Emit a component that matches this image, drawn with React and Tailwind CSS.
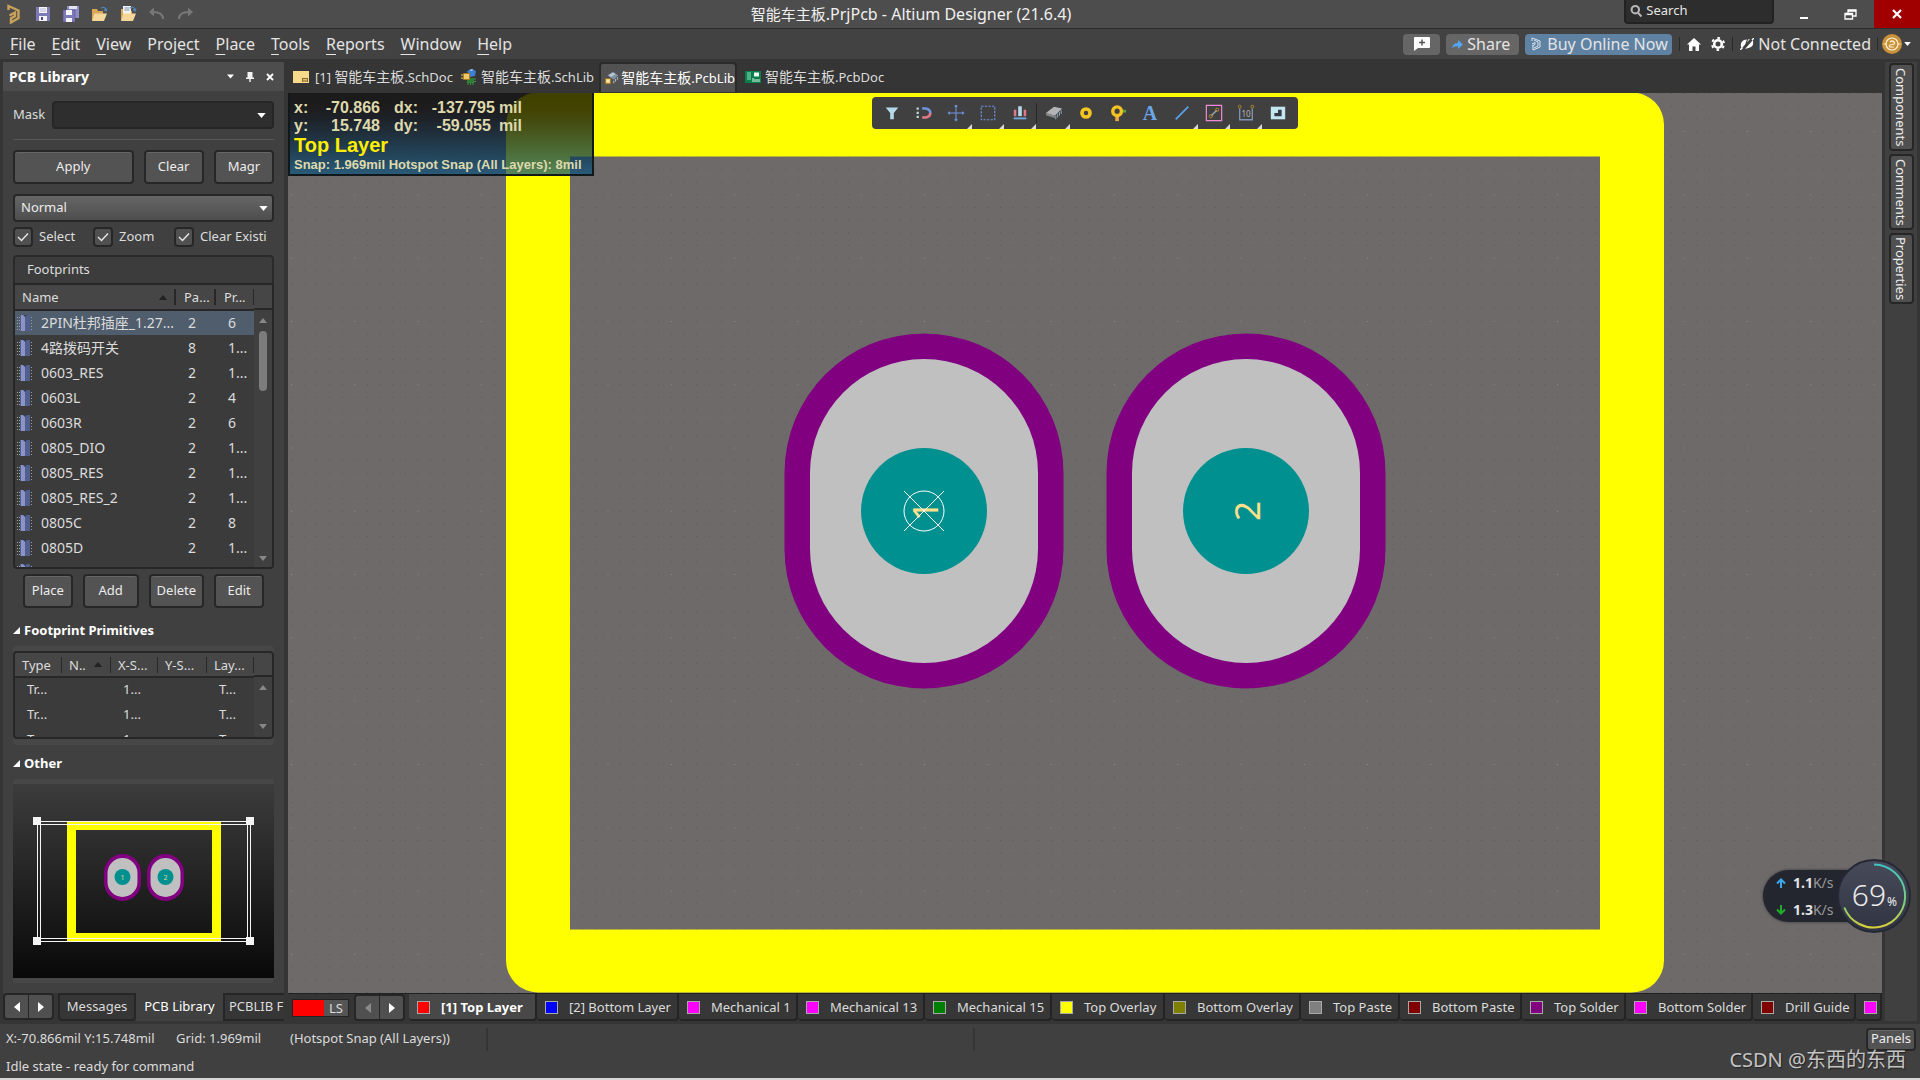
import { useState } from "react";

const menus = [
  ["", "F", "ile"],
  ["", "E", "dit"],
  ["", "V", "iew"],
  ["Proje", "c", "t"],
  ["", "P", "lace"],
  ["", "T", "ools"],
  ["", "R", "eports"],
  ["", "W", "indow"],
  ["", "H", "elp"],
];

const footprints = [
  ["2PIN杜邦插座_1.27...", "2", "6"],
  ["4路拨码开关", "8", "1..."],
  ["0603_RES", "2", "1..."],
  ["0603L", "2", "4"],
  ["0603R", "2", "6"],
  ["0805_DIO", "2", "1..."],
  ["0805_RES", "2", "1..."],
  ["0805_RES_2", "2", "1..."],
  ["0805C", "2", "8"],
  ["0805D", "2", "1..."],
];

const layers = [
  { name: "[1] Top Layer", color: "bg-[#ff0000]", width: "w-[128px]" },
  { name: "[2] Bottom Layer", color: "bg-[#0000ff]", width: "w-[142px]" },
  { name: "Mechanical 1", color: "bg-[#ff00ff]", width: "w-[119px]" },
  { name: "Mechanical 13", color: "bg-[#ff00ff]", width: "w-[127px]" },
  { name: "Mechanical 15", color: "bg-[#008000]", width: "w-[127px]" },
  { name: "Top Overlay", color: "bg-[#ffff00]", width: "w-[113px]" },
  { name: "Bottom Overlay", color: "bg-[#808000]", width: "w-[136px]" },
  { name: "Top Paste", color: "bg-[#808080]", width: "w-[99px]" },
  { name: "Bottom Paste", color: "bg-[#800000]", width: "w-[122px]" },
  { name: "Top Solder", color: "bg-[#800080]", width: "w-[104px]" },
  { name: "Bottom Solder", color: "bg-[#ff00ff]", width: "w-[127px]" },
  { name: "Drill Guide", color: "bg-[#800000]", width: "w-[103px]" },
  { name: "", color: "bg-[#ff00ff]", width: "w-[26px]" },
];

const buttonStyle =
  "flex items-center justify-center rounded border-2 border-[#272727] bg-[#535353] text-[13px] text-[#ececec] shadow-[inset_0_1px_0_#666]";

/* ---------- small icons ---------- */

function Caret({ className }) {
  return (
    <svg viewBox="0 0 10 6" className={className} fill="currentColor">
      <path d="M0 0h10L5 6z" />
    </svg>
  );
}

function AltiumLogo() {
  return (
    <svg viewBox="0 0 14 20" className="h-5 w-3.5" fill="none" stroke="#c9a25a" strokeWidth="2.4">
      <path d="M1.5 6V2l10 4.5V14L4 18.5v-4L8 12V8.5l-5.500 3" />
    </svg>
  );
}

function SaveIcon() {
  return (
    <svg viewBox="0 0 16 16" className="size-4">
      <path d="M1 1h14v14H1z" fill="#7d7ab8" />
      <path d="M4 1h8v6H4z" fill="#f4f4fa" />
      <path d="M5 3h6M5 5h6" stroke="#b7b7cf" />
      <path d="M4 10h8v5H4z" fill="#f4f4fa" />
      <path d="M6 11h2v3H6z" fill="#4b4a7d" />
    </svg>
  );
}

function SaveAllIcon() {
  return (
    <svg viewBox="0 0 16 16" className="size-4">
      <path d="M4 0h12v12H4z" fill="#8e8bc6" />
      <path d="M6 0h8v3H6z" fill="#e6e6f2" />
      <path d="M0 4h12v12H0z" fill="#7d7ab8" stroke="#55538c" strokeWidth=".6" />
      <path d="M3 4h6v5H3z" fill="#f4f4fa" />
      <path d="M3 12h6v4H3z" fill="#f4f4fa" />
    </svg>
  );
}

function OpenIcon({ page }) {
  return (
    <svg viewBox="0 0 17 16" className="h-4 w-[17px]">
      <path d="M1 3h5l1 2h5v9H1z" fill="#d9a957" />
      {page && <path d="M3 0h8v8H3z" fill="#f2f2f2" />}
      {page && <path d="M4.5 2h5M4.5 4h5" stroke="#7c97ad" />}
      <path d="M3.5 7.5H16L13 15H1z" fill="#f6d79a" />
      <path d="M10 2q4-2 5 2M13 3.5l2 1.5 1-2.5" fill="none" stroke="#4f86b5" strokeWidth="1.2" />
    </svg>
  );
}

function UndoIcon({ flip }) {
  return (
    <svg viewBox="0 0 16 14" className={flip ? "h-3.5 w-4 -scale-x-100" : "h-3.5 w-4"} fill="none" stroke="#777" strokeWidth="2">
      <path d="M14 12Q14 5 4 5" />
      <path d="M0 5l5-4.5v9z" fill="#777" stroke="none" />
    </svg>
  );
}

function PinIcon() {
  return (
    <svg viewBox="0 0 8 10" className="h-2.5 w-2" fill="#f2f2f2">
      <path d="M1.5 0h5v5.5H8V7H4.7v3H3.3V7H0V5.5h1.5z" />
    </svg>
  );
}

function SchDocIcon() {
  return (
    <svg viewBox="0 0 16 12" className="h-3 w-4">
      <path d="M0 0h16v12H0z" fill="#f7d98c" />
      <path d="M9 7h6v4H9z" fill="#8a6a2a" />
      <path d="M10 8.5h4M10 10h4" stroke="#f7d98c" strokeWidth=".8" />
    </svg>
  );
}

function SchLibIcon() {
  return (
    <svg viewBox="0 0 16 16" className="size-4">
      <path d="M6 2l5-2 4 2-1 5-5 1z" fill="#3f7fd0" />
      <path d="M8 1l4-1-1 2z" fill="#b9d9f7" />
      <path d="M6 9h7v5H6z" fill="#2c7d33" />
      <path d="M7 13v3M9.5 13v3M12 13v3M13 10h2M13 12.5h2" stroke="#3b9a44" />
      <path d="M2.500 4.500h6v6h-6z" fill="#f2c766" stroke="#a87c25" />
      <path d="M0 6h2M0 9h2" stroke="#f2c766" />
    </svg>
  );
}

function PcbLibIcon() {
  return (
    <svg viewBox="0 0 16 16" className="size-4">
      <path d="M4 5l6-4 6 4-5 5z" fill="#7f93a6" />
      <path d="M5 5l5-3 3 1.500-5 3.500z" fill="#b9c7d3" />
      <path d="M11 11v3M13 9v3M15 7v3" stroke="#c4cdd6" />
      <path d="M1.500 8.500h6v6h-6z" fill="#f2c766" stroke="#8d6a22" />
      <path d="M3 10h3v3H3z" fill="#ffe9ad" />
    </svg>
  );
}

function PcbDocIcon() {
  return (
    <svg viewBox="0 0 16 12" className="h-3 w-4">
      <path d="M0 0h16v12H0z" fill="#07804c" />
      <path d="M2 2h4M2 4h4M2 6h4M2 8h4" stroke="#9fe0bd" />
      <path d="M9 1.5h5v4H9z" fill="#f1f5f1" />
      <path d="M8 7v4M10 8v3M12 8v3M14 8v3" stroke="#e4f1e8" />
    </svg>
  );
}

function ChipIcon() {
  return (
    <svg viewBox="0 0 16 16" className="size-4 shrink-0">
      <path d="M0 2.5h16M0 5.5h16M0 8.5h16M0 11.5h16M0 14.5h16" stroke="#9c9f9b" strokeDasharray="1 1" />
      <path d="M3 0h10v16H3z" fill="#4f608f" />
      <path d="M4 0h4v16H4z" fill="#8e93c6" />
      <path d="M6 0h4l-2 2z" fill="#353f5e" />
    </svg>
  );
}

/* ---------- top bars ---------- */

function TitleBar() {
  return (
    <header className="flex h-7 shrink-0 items-center bg-[#4d4d4d]">
      <div className="flex w-[198px] items-center gap-3 pl-[7px]">
        <AltiumLogo />
        <button aria-label="Save" className="ml-0.5"><SaveIcon /></button>
        <button aria-label="Save all"><SaveAllIcon /></button>
        <button aria-label="Open"><OpenIcon /></button>
        <button aria-label="Open project"><OpenIcon page /></button>
        <button aria-label="Undo"><UndoIcon /></button>
        <button aria-label="Redo"><UndoIcon flip /></button>
      </div>
      <h1 className="flex-1 text-center text-base text-[#f0f0f0]">
        <span className="text-[15px]">智能车主板</span>.PrjPcb - Altium Designer (21.6.4)
      </h1>
      <label className="mb-1 flex h-6 w-[150px] items-center gap-1 rounded-b border-2 border-t-0 border-[#222] bg-[#2d2d2d] px-1">
        <svg viewBox="0 0 14 14" className="size-3.5" fill="none" stroke="#b5b5b5" strokeWidth="2.4">
          <circle cx="6" cy="5.5" r="4.2" />
          <path d="M9 9l4 4.2" />
        </svg>
        <input placeholder="Search" aria-label="Search" className="w-full min-w-0 text-[13px] placeholder:text-[#e6e6e6]" />
      </label>
      <div className="flex h-full w-[146px] items-center">
        <button aria-label="Minimize" className="flex flex-1 justify-center pt-2 pl-1.5">
          <span className="h-0.5 w-2 bg-white" />
        </button>
        <button aria-label="Restore" className="flex flex-1 justify-center">
          <svg viewBox="0 0 13 11" className="h-[11px] w-[13px]" fill="none" stroke="#fff" strokeWidth="1.3">
            <path d="M1 4.5h7.5V10H1zM4 4V1h8v6H9M4 2h8M1 5.5h7" />
          </svg>
        </button>
        <button aria-label="Close" className="flex h-full w-[46px] items-center justify-center bg-[#a00000]">
          <svg viewBox="0 0 10 10" className="size-2.5" stroke="#fff" strokeWidth="2.2">
            <path d="M1 1l8 8M9 1l-8 8" />
          </svg>
        </button>
      </div>
    </header>
  );
}

function MenuBar() {
  return (
    <nav className="flex h-[31px] shrink-0 items-center border-t border-[#2d2d2d] bg-[#424242] text-base text-[#e4e4e4]">
      <div className="flex gap-4 pl-2.5">
        {menus.map(([before, key, after]) => (
          <button key={key + after}>
            {before}
            <span className="underline underline-offset-4">{key}</span>
            {after}
          </button>
        ))}
      </div>
      <div className="ml-auto flex items-center pr-[9px] whitespace-nowrap">
        <button aria-label="Comment" className="mr-1.5 flex h-[21px] w-[37px] items-center justify-center rounded-sm bg-[#666]">
          <svg viewBox="0 0 16 14" className="h-3.5 w-4">
            <path d="M1 0h14q1 0 1 1v9q0 1-1 1H4l-4 3V1q0-1 1-1z" fill="#fff" />
            <path d="M8 2.5v6M5 5.5h6" stroke="#555" strokeWidth="1.5" />
          </svg>
        </button>
        <button className="mr-1.5 flex h-[21px] w-[73px] items-center gap-1 rounded-sm bg-[#666] pl-1.5">
          <svg viewBox="0 0 11 9" className="h-[9px] w-[11px]" fill="#53a6f0">
            <path d="M0 8q1-5 6-5V0l5 4.500L6 9V6Q2 6 0 8z" />
          </svg>
          Share
        </button>
        <button className="flex h-[21px] w-[147px] items-center gap-1.5 rounded-sm bg-[#5f82a3] pl-1.5">
          <svg viewBox="0 0 10 14" className="h-3.5 w-2.5" fill="none" stroke="#dce6ee" strokeWidth="1">
            <path d="M1 4V1l8 3v6l-7 3V9M3 3l4 2v4l-4 2M1 7l3-1.5v2L1 9" />
          </svg>
          Buy Online Now
        </button>
        <span className="mx-[7px] h-3.5 w-px bg-[#2b2b2b]" />
        <button aria-label="Home">
          <svg viewBox="0 0 14 13" className="h-[13px] w-3.5" fill="#fff">
            <path d="M7 0l7 6.5h-2V13H8.5V8.5h-3V13H2V6.500H0z" />
          </svg>
        </button>
        <button aria-label="Settings" className="ml-2.5">
          <svg viewBox="0 0 14 14" className="size-3.5" fill="none" stroke="#fff">
            <circle cx="7" cy="7" r="3.8" strokeWidth="2.6" />
            <circle cx="7" cy="7" r="6" strokeWidth="2" strokeDasharray="2.6 3.683" strokeDashoffset="-1.8" />
          </svg>
        </button>
        <span className="mx-[7px] h-3.5 w-px bg-[#2b2b2b]" />
        <a href="#" className="flex items-center gap-1">
          <svg viewBox="0 0 14 12" className="h-3 w-3.5">
            <path d="M1 9q-1-5 3-7l6-1-8 9zM13 3q1 5-3 6.5L5 11l8-9z" fill="#fff" />
            <path d="M0 12l2.5-2.5M12 2l2-2" stroke="#fff" strokeWidth="1.5" />
            <path d="M8 0L4 12" stroke="#424242" strokeWidth="1.2" />
          </svg>
          Not Connected
        </a>
        <span className="mr-1 ml-1.5 h-3.5 w-px bg-[#2b2b2b]" />
        <button aria-label="Account" className="flex items-center gap-0.5">
          <svg viewBox="0 0 20 20" className="size-5" fill="none" stroke="#fff2d4" strokeWidth="1.2">
            <circle cx="10" cy="10" r="10" fill="#c8913a" stroke="none" />
            <circle cx="10" cy="10" r="6" />
            <path d="M8 8q2-2 4 0t-2 2.5-2 2.5h4M1.5 10H4M16 10h2.5" />
          </svg>
          <Caret className="h-1 w-[7px] text-white" />
        </button>
      </div>
    </nav>
  );
}

/* ---------- left panel ---------- */

function ScrollArrow({ up }) {
  return <Caret className={up ? "h-[5px] w-2 shrink-0 rotate-180 text-[#888]" : "h-[5px] w-2 shrink-0 text-[#888]"} />;
}

function Check({ label, className }) {
  const [on, setOn] = useState(true);
  return (
    <label className={"flex items-center gap-1.5 whitespace-nowrap " + className}>
      <span className="grid size-5">
        <input
          type="checkbox"
          checked={on}
          onChange={() => setOn(!on)}
          className="col-start-1 row-start-1 size-5 appearance-none rounded border-2 border-[#272727] bg-[#505050]"
        />
        {on && (
          <svg viewBox="0 0 20 20" className="pointer-events-none col-start-1 row-start-1" fill="none" stroke="#e8e8e8" strokeWidth="1.4">
            <path d="M5 10l3.5 3.5L15 6.5" />
          </svg>
        )}
      </span>
      {label}
    </label>
  );
}

function FootprintTable() {
  const [active, setActive] = useState(0);
  return (
    <div className="mt-2">
      <h3 className="h-7 rounded-t border-2 border-b-0 border-[#2a2a2a] bg-[#3c3c3c] pl-3 leading-6">Footprints</h3>
      <div className="grid h-[286px] grid-cols-[1fr_18px] grid-rows-[minmax(0,1fr)] overflow-hidden rounded-b border-2 border-[#272727] bg-[#3b3b3b]">
        <table className="w-full table-fixed self-start">
          <colgroup>
            <col />
            <col className="w-[40px]" />
            <col className="w-[38px]" />
          </colgroup>
          <thead>
            <tr className="h-[25px] border-b-2 border-[#272727] bg-[#464646] text-left">
              <th className="font-normal">
                <span className="flex items-center justify-between border-r-2 border-[#272727] pr-1.5 pl-[7px] leading-4">
                  Name
                  <Caret className="h-[5px] w-2.5 rotate-180 text-[#222]" />
                </span>
              </th>
              <th className="font-normal">
                <span className="block border-r-2 border-[#272727] pl-2 leading-4">Pa...</span>
              </th>
              <th className="font-normal">
                <span className="block border-r border-[#272727] pl-2 leading-4">Pr...</span>
              </th>
            </tr>
          </thead>
          <tbody className="text-sm">
            {footprints.map(([name, pads, prims], i) => (
              <tr key={name} onClick={() => setActive(i)} className={i === active ? "h-[25px] bg-[#4f5d6d]" : "h-[25px]"}>
                <td>
                  <span className="flex items-center gap-2 pl-0.5 leading-5 whitespace-nowrap">
                    <ChipIcon />
                    {name}
                  </span>
                </td>
                <td className="pl-3">{pads}</td>
                <td className="pl-3">{prims}</td>
              </tr>
            ))}
            <tr>
              <td className="pt-1 pl-0.5"><ChipIcon /></td>
            </tr>
          </tbody>
        </table>
        <div className="flex flex-col">
          <div className="h-[25px] shrink-0 border-b-2 border-[#272727] bg-[#464646]" />
          <div className="flex flex-1 flex-col items-center bg-[#404040] pt-2 pb-1.5">
            <ScrollArrow up />
            <span className="mt-2 h-[60px] w-2 rounded-full bg-[#7c7c7c]" />
            <span className="flex-1" />
            <ScrollArrow />
          </div>
        </div>
      </div>
    </div>
  );
}

function PrimitivesTable() {
  return (
    <div className="mt-1.5 rounded bg-[#474747] pt-[5px] pb-1.5">
      <div className="grid h-[88px] grid-cols-[1fr_18px] grid-rows-[minmax(0,1fr)] overflow-hidden rounded border-2 border-[#272727] bg-[#3b3b3b]">
        <table className="w-full table-fixed self-start">
          <colgroup>
            <col className="w-[47px]" />
            <col className="w-[49px]" />
            <col className="w-[47px]" />
            <col className="w-[49px]" />
            <col />
          </colgroup>
          <thead>
            <tr className="h-6 border-b-2 border-[#272727] bg-[#464646] text-left">
              {["Type", "N..", "X-S...", "Y-S...", "Lay..."].map((head) => (
                <th key={head} className="font-normal">
                  <span className="flex items-center justify-between border-r border-[#272727] pr-[7px] pl-[7px] leading-4 whitespace-nowrap">
                    {head}
                    {head === "N.." && <Caret className="h-[5px] w-2.5 rotate-180 text-[#222]" />}
                  </span>
                </th>
              ))}
            </tr>
          </thead>
          <tbody>
            {[0, 1, 2].map((i) => (
              <tr key={i} className="h-[25px]">
                <td className="pl-3">Tr...</td>
                <td />
                <td className="pl-3">1...</td>
                <td />
                <td className="pl-3">T...</td>
              </tr>
            ))}
          </tbody>
        </table>
        <div className="flex flex-col">
          <div className="h-6 shrink-0 border-b-2 border-[#272727] bg-[#464646]" />
          <div className="flex flex-1 flex-col items-center justify-between bg-[#404040] pt-2 pb-2">
            <ScrollArrow up />
            <ScrollArrow />
          </div>
        </div>
      </div>
    </div>
  );
}

function SectionTitle({ children }) {
  return (
    <h2 className="flex items-center gap-1 leading-5 font-bold text-white">
      <svg viewBox="0 0 7 7" className="size-[7px]" fill="#fff">
        <path d="M7 0v7H0z" />
      </svg>
      {children}
    </h2>
  );
}

function Preview() {
  return (
    <div className="mt-1.5 rounded bg-[#474747] py-[5px]">
      <svg viewBox="0 0 261 194" className="block w-full">
        <defs>
          <linearGradient id="previewBg" x1="0" y1="0" x2="0" y2="1">
            <stop offset="0" stopColor="#3c3c3c" />
            <stop offset="1" stopColor="#090909" />
          </linearGradient>
        </defs>
        <rect width="261" height="194" fill="url(#previewBg)" />
        <path d="M54 38h154v119H54zM63 46v103h136V46z" fill="#ff0" fillRule="evenodd" />
        <path d="M26 37.5h210M26 40.5h210M26 154.5h210M26 157.5h210M24.5 38v119M27.5 38v119M234.5 38v119M237.5 38v119" stroke="#f4f4f4" />
        {[24, 237].map((x) => [37, 157].map((y) => <rect key={x + "-" + y} x={x - 4} y={y - 4} width="8" height="8" fill="#f4f4f4" />))}
        {[109.5, 152.5].map((x, i) => (
          <g key={x}>
            <rect x={x - 18.5} y="70" width="37" height="47" rx="18.5" fill="#800080" />
            <rect x={x - 15} y="74" width="30" height="39" rx="15" fill="#c0c0c0" />
            <circle cx={x} cy="93" r="8" fill="#009090" />
            <text x={x} y="95.5" fontSize="7" textAnchor="middle" fill="#e0d48a">{i + 1}</text>
          </g>
        ))}
      </svg>
    </div>
  );
}

function LibraryPanel() {
  return (
    <aside className="flex w-[281px] shrink-0 flex-col bg-[#404040] text-[13px] text-[#dcdcdc]">
      <div className="flex h-[29px] shrink-0 items-center bg-[#4d4d4d] pr-2.5 pl-1.5 text-white">
        <h2 className="flex-1 text-sm font-bold">PCB Library</h2>
        <button aria-label="Panel menu"><Caret className="h-[5px] w-[7px]" /></button>
        <button aria-label="Pin" className="ml-3"><PinIcon /></button>
        <button aria-label="Close panel" className="ml-3">
          <svg viewBox="0 0 8 8" className="size-2" stroke="#fff" strokeWidth="1.8">
            <path d="M1 1l6 6M7 1L1 7" />
          </svg>
        </button>
      </div>
      <div className="flex flex-1 flex-col px-2.5 pt-2.5">
        <label className="flex items-center">
          <span className="w-[39px]">Mask</span>
          <span className="flex h-7 flex-1 items-center rounded border-2 border-[#262626] bg-[#2e2e2e] pr-1.5">
            <input className="w-full min-w-0 px-1" />
            <Caret className="h-[5px] w-[9px] shrink-0 text-white" />
          </span>
        </label>
        <hr className="mt-2.5 border-[#575757]" />
        <div className="mt-2.5 grid h-[34px] grid-cols-[2fr_1fr_1fr] gap-2.5">
          <button className={buttonStyle}>Apply</button>
          <button className={buttonStyle}>Clear</button>
          <button className={buttonStyle}>Magr</button>
        </div>
        <div className="mt-2.5 grid items-center">
          <select
            aria-label="Highlight mode"
            className="col-start-1 row-start-1 h-7 appearance-none rounded border-2 border-[#272727] bg-linear-to-b from-[#666] to-[#4e4e4e] pl-1.5 text-[#ececec]"
          >
            <option>Normal</option>
          </select>
          <Caret className="pointer-events-none col-start-1 row-start-1 mr-1.5 h-[5px] w-[9px] justify-self-end text-white" />
        </div>
        <div className="mt-[5px] flex">
          <Check label="Select" className="w-20" />
          <Check label="Zoom" className="w-[81px]" />
          <Check label="Clear Existi" className="" />
        </div>
        <FootprintTable />
        <div className="mt-[5px] flex h-[34px] gap-2.5 px-2.5">
          <button className={buttonStyle + " w-[50px]"}>Place</button>
          <button className={buttonStyle + " w-14"}>Add</button>
          <button className={buttonStyle + " w-14"}>Delete</button>
          <button className={buttonStyle + " w-[50px]"}>Edit</button>
        </div>
        <div className="mt-3">
          <SectionTitle>Footprint Primitives</SectionTitle>
          <PrimitivesTable />
        </div>
        <div className="mt-2">
          <SectionTitle>Other</SectionTitle>
          <Preview />
        </div>
      </div>
      <div className="flex h-7 shrink-0 items-stretch bg-[#353535]">
        <Arrows />
        <div className="ml-1 flex flex-1 overflow-hidden whitespace-nowrap">
          <button className="w-[78px] shrink-0 rounded-b-sm border-2 border-[#262626] bg-[#363636]">Messages</button>
          <button className="w-[87px] shrink-0 bg-[#404040] text-white">PCB Library</button>
          <button className="flex-1 overflow-hidden border-2 border-r-0 border-[#262626] bg-[#363636] pl-1 text-left">PCBLIB F</button>
        </div>
      </div>
    </aside>
  );
}

function Arrows({ dim }) {
  return (
    <div className="flex h-[27px] w-[51px] shrink-0 rounded border-2 border-[#262626] bg-[#505050]">
      <button aria-label="Scroll left" className={dim ? "flex flex-1 items-center justify-center border-r border-[#262626] text-[#8a8a8a]" : "flex flex-1 items-center justify-center border-r border-[#262626] text-white"}>
        <svg viewBox="0 0 6 10" className="h-2.5 w-1.5" fill="currentColor"><path d="M6 0v10L0 5z" /></svg>
      </button>
      <button aria-label="Scroll right" className="flex flex-1 items-center justify-center text-white">
        <svg viewBox="0 0 6 10" className="h-2.5 w-1.5" fill="currentColor"><path d="M0 0v10l6-5z" /></svg>
      </button>
    </div>
  );
}

/* ---------- editor ---------- */

function DocName({ prefix, ext }) {
  return (
    <span>
      {prefix}
      <span className="text-sm">智能车主板</span>
      {ext}
    </span>
  );
}

function DocTabs() {
  return (
    <div className="flex h-[34px] shrink-0 items-end pb-px text-[13px] whitespace-nowrap text-[#dcdcdc]">
      <button className="flex h-[30px] w-[168px] items-center gap-1.5 pl-[5px]"><SchDocIcon /><DocName prefix="[1] " ext=".SchDoc" /></button>
      <button className="flex h-[30px] w-[143px] items-center gap-1 pl-[5px]"><SchLibIcon /><DocName ext=".SchLib" /></button>
      <button className="flex h-[30px] w-[138px] items-center gap-[3px] rounded-t border-2 border-b-0 border-[#2a2a2a] bg-[#525252] pl-[3px] text-white"><PcbLibIcon /><DocName ext=".PcbLib" /></button>
      <button className="flex h-[30px] items-center gap-1 pl-2"><PcbDocIcon /><DocName ext=".PcbDoc" /></button>
    </div>
  );
}

const tools = [
  { name: "Filter", art: <path d="M3 4h14l-5 6v7H8v-7z" fill="#b5dbea" /> },
  {
    name: "Snap",
    art: (
      <>
        <path d="M8 5h4q5 1 5 5" fill="none" stroke="#6f93dd" strokeWidth="3" />
        <path d="M8 15h4q5-1 5-5" fill="none" stroke="#e0788a" strokeWidth="3" />
        <path d="M3 4v13" stroke="#b9d5dd" strokeWidth="2.5" strokeDasharray="2.5 2" />
      </>
    ),
  },
  { name: "Move", more: true, art: <path d="M10 1.500v17M1.500 10h17M8.500 3L10 1.500 11.500 3M8.500 17l1.500 1.500 1.500-1.500M3 8.500L1.500 10 3 11.500M17 8.500l1.500 1.500-1.500 1.500" fill="none" stroke="#6f93dd" strokeWidth="1.2" /> },
  { name: "Select area", more: true, art: <path d="M2.500 2.500h15v15h-15z" fill="none" stroke="#6f93dd" strokeWidth="1.3" strokeDasharray="2.500 1.500" /> },
  {
    name: "Align",
    more: true,
    art: (
      <>
        <path d="M4.500 6.500v7M15.500 6.500v7" stroke="#e0788a" strokeWidth="2.8" />
        <path d="M8 2.500h4v11H8z" fill="#b5dbea" />
        <path d="M3 16h14" stroke="#6fa3d8" strokeWidth="2.200" />
      </>
    ),
  },
  {
    name: "Component",
    more: true,
    art: (
      <>
        <path d="M1 10l9-7 9 2-8 8z" fill="#b4b4b4" />
        <path d="M1 10v2.500l10 3V13z" fill="#888" />
        <path d="M12 13v4M14 11v4M16 9v4M18 7v4" stroke="#8fb6c6" />
      </>
    ),
  },
  { name: "Pad", art: <circle cx="10" cy="10" r="4.5" fill="none" stroke="#f4c420" strokeWidth="4" /> },
  {
    name: "Via",
    art: (
      <>
        <path d="M9 12v7" stroke="#f0a848" strokeWidth="4" />
        <path d="M13 8h6" stroke="#5aa83c" strokeWidth="3" />
        <circle cx="9" cy="8" r="4.8" fill="none" stroke="#f4c420" strokeWidth="3.8" />
      </>
    ),
  },
  { name: "String", glyph: "A" },
  { name: "Line", more: true, art: <path d="M3 17L17 3" stroke="#5b9fe6" strokeWidth="2" /> },
  {
    name: "Track",
    more: true,
    art: (
      <>
        <path d="M1.500 1.500h17v17h-17z" fill="none" stroke="#f08ad8" strokeWidth="1.3" />
        <path d="M7 13l6-6" stroke="#8fa3b5" strokeWidth="1.8" />
        <circle cx="13.5" cy="6.5" r="1.8" fill="none" stroke="#b98a30" />
        <circle cx="6.5" cy="13.5" r="1.8" fill="none" stroke="#b98a30" />
      </>
    ),
  },
  {
    name: "Dimension",
    more: true,
    art: (
      <>
        <path d="M3 5v12.500h14V5" fill="none" stroke="#7f93b5" strokeWidth="1.5" />
        <circle cx="3" cy="3" r="1.6" fill="none" stroke="#b98a30" />
        <circle cx="17" cy="3" r="1.6" fill="none" stroke="#b98a30" />
        <text x="10" y="14" fontSize="9" textAnchor="middle" fill="#b9b9b9">10</text>
      </>
    ),
  },
  {
    name: "Region",
    art: (
      <>
        <path d="M2 3h16v14H2z" fill="#c4e6f0" />
        <path d="M6 13.5h8v-7h-4V10H6z" fill="#333b40" />
      </>
    ),
  },
];

function ToolStrip() {
  return (
    <div className="absolute top-1 left-1/2 flex h-8 -translate-x-1/2 items-center rounded bg-[#404040] px-1">
      {tools.map((tool, i) => (
        <div key={tool.name} className="flex items-center">
          {i === 5 && <span className="mr-px h-5 w-px bg-[#272727]" />}
          <button aria-label={tool.name} className="grid h-8 w-8 place-items-center">
            {tool.glyph ? (
              <span className="col-start-1 row-start-1 font-['Liberation_Serif',serif] text-xl leading-5 font-bold text-[#6aa6ea]">{tool.glyph}</span>
            ) : (
              <svg viewBox="0 0 20 20" className="col-start-1 row-start-1 size-[18px]">{tool.art}</svg>
            )}
            {tool.more && (
              <svg viewBox="0 0 5 5" className="col-start-1 row-start-1 size-[5px] self-end justify-self-end" fill="#d8d8d8">
                <path d="M5 0v5H0z" />
              </svg>
            )}
          </button>
        </div>
      ))}
    </div>
  );
}

function HeadsUp() {
  return (
    <div className="absolute top-0 left-0 h-[83px] w-[306px] border-2 border-t-0 border-[#10181c] bg-linear-to-b from-black/75 to-[#0c537f]/70 pt-1.5 pl-1 font-['Liberation_Sans',sans-serif] font-bold whitespace-nowrap text-[#ded9ac]">
      <dl className="grid w-[228px] grid-cols-[20px_66px_50px_1fr] text-base leading-[18px]">
        <dt>x:</dt>
        <dd className="text-right">-70.866</dd>
        <dt className="pl-3.5">dx:</dt>
        <dd className="flex justify-end gap-1"><span>-137.795</span><span>mil</span></dd>
        <dt>y:</dt>
        <dd className="text-right">15.748</dd>
        <dt className="pl-3.5">dy:</dt>
        <dd className="flex justify-end gap-2"><span>-59.055</span><span>mil</span></dd>
      </dl>
      <p className="text-xl leading-5 text-[#ffee00]">Top Layer</p>
      <p className="text-[13px] leading-5">Snap: 1.969mil Hotspot Snap (All Layers): 8mil</p>
    </div>
  );
}

function Board() {
  const pads = [636, 958];
  return (
    <svg viewBox="0 0 1594 901" preserveAspectRatio="xMidYMid slice" className="absolute inset-0 size-full">
      <defs>
        <pattern id="fine" x="636" y="418.3" width="12.66" height="12.66" patternUnits="userSpaceOnUse">
          <rect width="1" height="1" fill="#5a5757" />
        </pattern>
        <pattern id="coarse" x="636" y="418.3" width="63.3" height="63.3" patternUnits="userSpaceOnUse">
          <rect width="1" height="1" fill="#969292" />
        </pattern>
      </defs>
      <rect width="1594" height="901" fill="#6e6a69" />
      <rect width="1594" height="901" fill="url(#fine)" />
      <rect width="1594" height="901" fill="url(#coarse)" />
      <path
        d="M250 0h1094a32 32 0 0 1 32 32v836a32 32 0 0 1-32 32H250a32 32 0 0 1-32-32V32a32 32 0 0 1 32-32zM282 64v773h1030V64z"
        fill="#ff0"
        fillRule="evenodd"
      />
      {pads.map((x, i) => (
        <g key={x}>
          <rect x={x - 139.5} y="241" width="279" height="355" rx="139.5" fill="#800080" />
          <rect x={x - 114} y="266.5" width="228" height="304" rx="114" fill="#c0c0c0" />
          <circle cx={x} cy="418.5" r="63" fill="#009090" />
          <text
            transform={`translate(${x + 14} 418.5) rotate(-90)`}
            textAnchor="middle"
            fontSize="35"
            fill="#ffe08a"
          >
            {i + 1}
          </text>
        </g>
      ))}
      <circle cx="636" cy="418.5" r="20" fill="none" stroke="#fff" />
      <path d="M616 398.5l40 40M656 398.5l-40 40" stroke="#fff" />
    </svg>
  );
}

function LayerTabs() {
  const [active, setActive] = useState(0);
  return (
    <div className="flex h-7 shrink-0 overflow-hidden border-t border-[#222] text-[13px] whitespace-nowrap text-[#dcdcdc]">
      <button className="mt-[5px] ml-1 flex h-[18px] w-[57px] shrink-0 items-center border border-[#222] bg-[#555]">
        <span className="h-full w-[31px] bg-[#ff0000]" />
        <span className="flex-1 leading-4">LS</span>
      </button>
      <span className="w-[5px] shrink-0" />
      <Arrows dim />
      <span className="w-1 shrink-0" />
      {layers.map((layer, i) => (
        <button
          key={i}
          aria-label={layer.name || "Next layer"}
          onClick={() => setActive(i)}
          className={
            "flex h-[27px] shrink-0 items-center gap-[11px] rounded-b-sm border-r-2 border-b-2 border-[#242424] pt-0.5 pl-2 " +
            layer.width +
            (i === active ? " bg-[#484848] font-bold text-white" : " bg-[#373737]")
          }
        >
          <span className={"size-[13px] shrink-0 border border-[#a8a8a8] " + layer.color} />
          {layer.name}
        </button>
      ))}
    </div>
  );
}

function SideTabs() {
  return (
    <div className="ml-[3px] flex w-8 shrink-0 flex-col items-center gap-[3px] bg-[#404040] pt-px text-[13px] text-[#ececec]">
      <button className="h-[88px] w-[25px] rounded border-2 border-[#262626] bg-[#505050] leading-5 [writing-mode:vertical-rl]">Components</button>
      <button className="h-[76px] w-[25px] rounded border-2 border-[#262626] bg-[#505050] leading-5 [writing-mode:vertical-rl]">Comments</button>
      <button className="h-[71px] w-[25px] rounded border-2 border-[#262626] bg-[#505050] leading-5 [writing-mode:vertical-rl]">Properties</button>
    </div>
  );
}

function StatusBar() {
  return (
    <footer className="flex h-14 shrink-0 flex-col border-b-2 border-[#d6d6d6] bg-[#404040] text-[13px] text-[#dcdcdc]">
      <div className="flex h-[31px] items-center pl-1.5">
        <span className="w-[170px]">X:-70.866mil Y:15.748mil</span>
        <span className="w-[114px]">Grid: 1.969mil</span>
        <span className="w-[196px]">(Hotspot Snap (All Layers))</span>
        <span className="h-[23px] w-0.5 bg-[#353535]" />
        <span className="w-[485px]" />
        <span className="h-[23px] w-0.5 bg-[#353535]" />
        <button className={buttonStyle + " mr-1 ml-auto h-[23px] w-[50px]"}>Panels</button>
      </div>
      <p className="pl-1.5 leading-6">Idle state - ready for command</p>
    </footer>
  );
}

function SpeedMeter() {
  return (
    <div className="absolute right-[9px] bottom-[147px] flex items-center text-[#e4e4e4]">
      <div className="-mr-7 grid h-[52px] w-[102px] grid-cols-[17px_1fr] content-center items-center rounded-l-full bg-[#23262f] pl-[13px] text-sm leading-[27px] shadow-[0_0_3px_#333]">
        <svg viewBox="0 0 10 10" className="size-2.5" fill="none" stroke="#3ba7e6" strokeWidth="2"><path d="M5 10V2M1 5.5l4-4 4 4" /></svg>
        <span className="whitespace-nowrap"><b>1.1</b><span className="text-[#999]">K/s</span></span>
        <svg viewBox="0 0 10 10" className="size-2.5" fill="none" stroke="#21ab2d" strokeWidth="2"><path d="M5 0v8M1 4.5l4 4 4-4" /></svg>
        <span className="whitespace-nowrap"><b>1.3</b><span className="text-[#999]">K/s</span></span>
      </div>
      <svg viewBox="0 0 74 74" className="relative size-[74px]">
        <defs>
          <linearGradient id="dial" x1="0" y1="0" x2="0" y2="1">
            <stop offset="0" stopColor="#474b5a" />
            <stop offset="1" stopColor="#303442" />
          </linearGradient>
          <linearGradient id="arc" x1="0" y1="0" x2="0" y2="1">
            <stop offset="0" stopColor="#3fc4c4" />
            <stop offset=".6" stopColor="#7ccf7a" />
            <stop offset="1" stopColor="#d8cf3c" />
          </linearGradient>
        </defs>
        <circle cx="37" cy="37" r="36" fill="url(#dial)" stroke="#262935" strokeWidth="2" />
        <path d="M37 5.5A31.5 31.5 0 1 1 7.3 48.5" fill="none" stroke="url(#arc)" strokeWidth="2" />
        <text x="32" y="47" fontSize="30" fontWeight="300" textAnchor="middle" fill="#ececec">69</text>
        <text x="55" y="47" fontSize="12" textAnchor="middle" fill="#ececec">%</text>
      </svg>
    </div>
  );
}

export default function App() {
  return (
    <div className="relative flex h-screen flex-col overflow-hidden bg-[#353535] font-['Noto_Sans','Noto_Sans_CJK_SC',sans-serif]">
      <TitleBar />
      <MenuBar />
      <div className="flex min-h-0 flex-1 pb-[3px]">
        <div className="flex pt-[3px] pl-[3px]">
          <LibraryPanel />
        </div>
        <main className="ml-1 flex min-w-0 flex-1 flex-col">
          <DocTabs />
          <section className="relative min-h-0 flex-1 overflow-hidden">
            <Board />
            <HeadsUp />
            <ToolStrip />
          </section>
          <LayerTabs />
        </main>
        <div className="flex pt-[3px] pr-[3px]">
          <SideTabs />
        </div>
      </div>
      <StatusBar />
      <SpeedMeter />
      <p className="absolute right-3.5 bottom-2 text-xl leading-6 text-[#c4c4c4] [text-shadow:1px_1px_1px_#222]">CSDN @东西的东西</p>
    </div>
  );
}
